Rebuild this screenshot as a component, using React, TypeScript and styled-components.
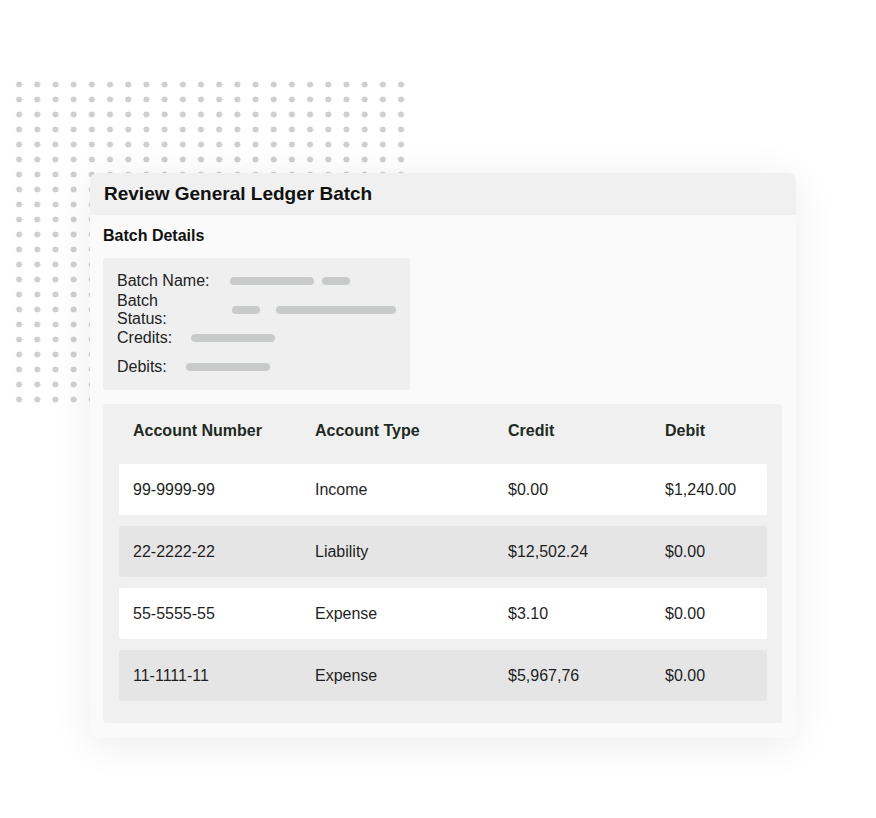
import React from 'react';
import styled, { createGlobalStyle } from 'styled-components';

const rows = [
  { num: '99-9999-99', type: 'Income', credit: '$0.00', debit: '$1,240.00', alt: false },
  { num: '22-2222-22', type: 'Liability', credit: '$12,502.24', debit: '$0.00', alt: true },
  { num: '55-5555-55', type: 'Expense', credit: '$3.10', debit: '$0.00', alt: false },
  { num: '11-1111-11', type: 'Expense', credit: '$5,967,76', debit: '$0.00', alt: true },
];

const details = [
  { label: 'Batch Name:', bars: [84, 28], gap: 8, offset: 21 },
  { label: 'Batch Status:', bars: [28, 120], gap: 16, offset: 21 },
  { label: 'Credits:', bars: [84], gap: 8, offset: 19 },
  { label: 'Debits:', bars: [84], gap: 8, offset: 19 },
];

const App = () => {
  return (
    <Page>
      <Global />
      <Dots />
      <Card>
        <Header>Review General Ledger Batch</Header>
        <Body>
          <SectionTitle>Batch Details</SectionTitle>
          <DetailsBox>
            {details.map((d) => (
              <DetailRow key={d.label}>
                <span>{d.label}</span>
                <Bars $gap={d.gap} $offset={d.offset}>
                  {d.bars.map((w, i) => (
                    <Bar key={i} style={{ width: w }} />
                  ))}
                </Bars>
              </DetailRow>
            ))}
          </DetailsBox>
          <TablePanel>
            <HeadRow>
              <Cell>Account Number</Cell>
              <Cell>Account Type</Cell>
              <Cell>Credit</Cell>
              <Cell>Debit</Cell>
            </HeadRow>
            {rows.map((r) => (
              <DataRow key={r.num} $alt={r.alt}>
                <Cell>{r.num}</Cell>
                <Cell>{r.type}</Cell>
                <Cell>{r.credit}</Cell>
                <Cell>{r.debit}</Cell>
              </DataRow>
            ))}
          </TablePanel>
        </Body>
      </Card>
    </Page>
  );
};

const Global = createGlobalStyle`
  body { margin: 0; background: #fff; font-family: "Liberation Sans", Arial, sans-serif; color: #1a1a1a; }
`;
const Page = styled.div`
  position: relative;
  width: 876px;
  height: 818px;
  padding: 173px 0 0 90px;
  box-sizing: border-box;
  overflow: hidden;
`;
const Dots = styled.div`
  position: absolute;
  left: 10px;
  top: 77px;
  width: 400px;
  height: 330px;
  background-image: radial-gradient(circle, #cfcfcf 2.8px, transparent 3.2px);
  background-size: 18.2px 15px;
  background-position: 0 0;
`;
const Card = styled.div`
  position: relative;
  width: 706px;
  height: 565px;
  background: #fafafa;
  border-radius: 8px;
  box-shadow: 0 6px 40px rgba(0, 0, 0, 0.08);
  overflow: hidden;
`;
const Header = styled.div`
  height: 42px;
  background: #f0f0f0;
  display: flex;
  align-items: center;
  padding-left: 14px;
  font-size: 19px;
  font-weight: 700;
  color: #111;
`;
const Body = styled.div`
  padding: 12px 14px 0 13px;
`;
const SectionTitle = styled.div`
  font-size: 16px;
  font-weight: 700;
  color: #111;
  height: 20px;
  margin-bottom: 11px;
`;
const DetailsBox = styled.div`
  width: 307px;
  height: 132px;
  box-sizing: border-box;
  background: #efefef;
  border-radius: 3px;
  padding: 13px 14px;
  display: flex;
  flex-direction: column;
  gap: 8.5px;
  font-size: 16px;
  color: #222;
`;
const DetailRow = styled.div`
  display: flex;
  align-items: center;
  height: 20px;
`;
const Bars = styled.div<{ $gap: number; $offset: number }>`
  display: flex;
  gap: ${(p) => p.$gap}px;
  margin-left: ${(p) => p.$offset}px;
`;
const Bar = styled.div`
  height: 8px;
  border-radius: 4px;
  background: #c9cbcb;
`;
const TablePanel = styled.div`
  margin-top: 14px;
  width: 679px;
  height: 319px;
  box-sizing: border-box;
  background: #f0f0f0;
  border-radius: 4px;
  padding: 0 15px 0 16px;
  display: flex;
  flex-direction: column;
  gap: 11px;
`;
const Grid = styled.div`
  display: grid;
  grid-template-columns: 182px 193px 157px 1fr;
  align-items: center;
  padding-left: 14px;
  height: 51px;
  font-size: 16px;
`;
const HeadRow = styled(Grid)`
  height: 45px;
  margin-top: 4px;
  font-weight: 700;
  color: #1e2a22;
`;
const DataRow = styled(Grid)<{ $alt: boolean }>`
  background: ${(p) => (p.$alt ? '#e5e5e5' : '#ffffff')};
  border-radius: 2px;
  color: #1f1f1f;
`;
const Cell = styled.div``;

export default App;
